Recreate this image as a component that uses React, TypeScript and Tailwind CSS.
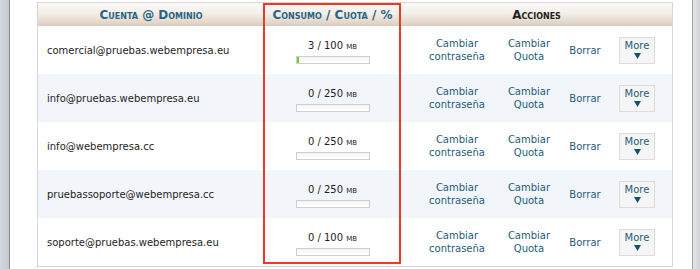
import React from 'react'

type Account = {
  email: string
  used: number
  quota: number
}

const accounts: Account[] = [
  { email: 'comercial@pruebas.webempresa.eu', used: 3, quota: 100 },
  { email: 'info@pruebas.webempresa.eu', used: 0, quota: 250 },
  { email: 'info@webempresa.cc', used: 0, quota: 250 },
  { email: 'pruebassoporte@webempresa.cc', used: 0, quota: 250 },
  { email: 'soporte@pruebas.webempresa.eu', used: 0, quota: 100 },
]

function UsageBar({ used, quota }: { used: number; quota: number }) {
  const pct = Math.max(0, Math.min(100, (used / quota) * 100))
  return (
    <div className="h-[8px] w-[74px] border border-[#cfcfcf] bg-gradient-to-b from-[#f4f4f4] to-white">
      {pct > 0 && (
        <div className="h-full bg-[#6fcf2f]" style={{ width: `${Math.max(pct, 4)}%` }} />
      )}
    </div>
  )
}

function MoreButton() {
  return (
    <button className="flex h-[27px] w-[36px] flex-col items-center justify-center border border-[#dcdcdc] bg-[#f5f5f5] leading-none text-[#235d7a]">
      <span className="text-[10px]">More</span>
      <svg width="7" height="6" viewBox="0 0 7 6" className="mt-[2px]">
        <path d="M0 0 H7 L3.5 6 Z" fill="#1b4e66" />
      </svg>
    </button>
  )
}

export default function App() {
  return (
    <div
      className="flex h-[269px] w-[700px] bg-white text-[10px] text-[#1e1e1e]"
      style={{ fontFamily: '"DejaVu Sans", Verdana, sans-serif' }}
    >
      {/* left frame */}
      <div className="w-[9px] bg-gradient-to-r from-[#d5d9de] to-[#c3c8cf]" />
      <div className="w-px bg-[#8a8d91]" />

      <div className="flex-1 pl-[27px] pt-[2px]">
        <div className="relative w-[636px] border border-[#d6d6d6]">
          {/* header */}
          <div className="flex h-[23px] items-center bg-gradient-to-b from-[#fbfaf8] via-[#f1ece5] to-[#dccdbe] font-bold [font-variant:small-caps] text-[12px]">
            <div className="w-[226px] text-center text-[#2b6282]">Cuenta @ Dominio</div>
            <div className="w-[137px] text-center text-[#2b6282]">Consumo / Cuota / %</div>
            <div className="flex-1 text-center text-[#222]">Acciones</div>
          </div>

          {accounts.map((a, i) => (
            <div
              key={a.email}
              className={`flex h-[48px] items-center ${i % 2 === 1 ? 'bg-[#f2f5fa]' : 'bg-white'}`}
            >
              <div className="w-[226px] pl-[9px]">{a.email}</div>
              <div className="flex w-[137px] flex-col items-center gap-[3px] pt-[1px]">
                <div>
                  {a.used} / {a.quota} <span className="[font-variant:small-caps]">mb</span>
                </div>
                <UsageBar used={a.used} quota={a.quota} />
              </div>
              <div className="flex flex-1 items-center pl-[20px] leading-[13px] text-[#235d7a]">
                <div className="w-[72px] text-center">
                  Cambiar
                  <br />
                  contraseña
                </div>
                <div className="w-[72px] text-center">
                  Cambiar
                  <br />
                  Quota
                </div>
                <div className="w-[40px] text-center">Borrar</div>
                <div className="flex w-[64px] justify-center">
                  <MoreButton />
                </div>
              </div>
            </div>
          ))}

          {/* highlight annotation */}
          <div className="pointer-events-none absolute left-[225px] top-0 h-[261px] w-[138px] border-2 border-[#e8392a]" />
        </div>
      </div>

      {/* right frame */}
      <div className="w-px bg-[#9a9da1]" />
      <div className="w-[7px] bg-gradient-to-r from-[#e4e6e9] to-[#cfd3d8]" />
    </div>
  )
}
